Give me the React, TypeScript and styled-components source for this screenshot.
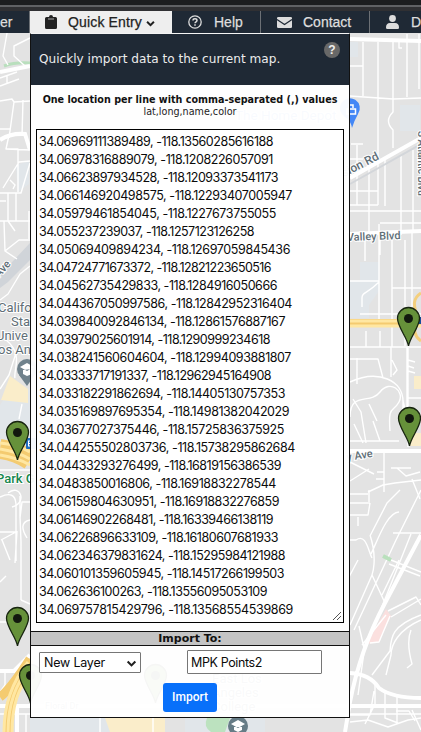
import React, { useLayoutEffect, useRef, useState } from "react";
import styled, { createGlobalStyle } from "styled-components";

const Global = createGlobalStyle`
  *{box-sizing:border-box}
  html,body{margin:0;width:421px;height:732px;overflow:hidden}
`;
const Page = styled.div`position:relative;width:421px;height:732px;overflow:hidden;display:flex;flex-direction:column;`;
const MapLayer = styled.svg`position:absolute;inset:0;`;
const Chrome = styled.div`position:relative;height:11px;background:#303033;border-top:5px solid #1c1d1f;flex:none;&::before{content:"";display:block;height:2px;background:#606164;}`;
const Nav = styled.nav`position:relative;display:flex;height:22px;background:#1f2935;flex:none;width:460px;`;
const NavItem = styled.div<{ $w: number; $active?: boolean; $pad: number; $gap: number }>`
  width:${p => p.$w}px;padding-left:${p => p.$pad}px;gap:${p => p.$gap}px;flex:none;
  display:flex;align-items:center;white-space:nowrap;
  font:14px/22px "Liberation Sans",Arial,sans-serif;
  -webkit-text-stroke:0.25px currentColor;
  color:${p => (p.$active ? "#222" : "#dedede")};
  background:${p => (p.$active ? "#eee" : "transparent")};
  border-right:1px solid ${p => (p.$active ? "#eee" : "#6c7075")};
  svg{flex:none;}
`;
const EntryLabel = styled.span`letter-spacing:.15px;`;
const EntryChevron = styled.svg`margin:2px 0 0 -7px;`;
const Panel = styled.section`position:relative;margin-left:30px;width:320px;height:685px;border:1px solid #111;border-top:1px solid #f4f4f4;background:rgba(255,255,255,.96);display:flex;flex-direction:column;`;
const Header = styled.header`height:51px;background:#1f2935;color:#ececec;display:flex;justify-content:space-between;padding:7px 9px 0 8px;flex:none;`;
const Lead = styled.span`font:12.1px/37px "DejaVu Sans",sans-serif;white-space:nowrap;`;
const HelpDot = styled.span`width:16px;height:16px;border-radius:50%;background:#686868;color:#eee;font:bold 12px/16px "Liberation Sans",sans-serif;text-align:center;margin-top:1px;`;
const Hint = styled.div`height:44px;padding-top:9px;display:flex;flex-direction:column;align-items:center;color:#1c1c1c;font:9.6px/12px "DejaVu Sans",sans-serif;flex:none;white-space:nowrap;`;
const HintTitle = styled.b`color:#111;`;
const Area = styled.div`position:relative;margin:0 5px;height:494px;border:1px solid #000;background:#fff;padding:2px;display:flex;flex-direction:column;flex:none;`;
const Grip = styled.svg`position:absolute;right:1px;bottom:1px;`;
const Row = styled.div`height:18px;`;
const Fitted = styled.span`display:inline-block;white-space:pre;color:#0b0b0b;font:12.5px/18px Inter,sans-serif;`;
const Band = styled.div`margin-top:8px;height:15px;border:solid #111;border-width:1px 0;background:#c4c4c4;color:#111;text-align:center;font:bold 11px/14px "DejaVu Sans",sans-serif;flex:none;`;
const Fields = styled.div`display:flex;justify-content:space-between;align-items:flex-start;padding:4px 27px 0 8px;height:37px;flex:none;`;
const Select = styled.div`margin-top:2px;width:102px;height:21px;border:1px solid #767676;border-radius:1px;background:#fff;padding:1px 3px 0 4px;display:flex;justify-content:space-between;align-items:center;`;
const Input = styled.div`width:135px;height:24px;border:1px solid #767676;border-radius:1px;background:#fff;padding:2px 3px;`;
const Button = styled.button`align-self:center;width:54px;height:29px;border:0;border-radius:3px;background:#0870fa;color:#fff;font:500 12px/29px Roboto,sans-serif;padding:0;`;

const Fit = ({ text, width }: { text: string; width: number }) => {
  const ref = useRef<HTMLSpanElement>(null);
  const [spacing, setSpacing] = useState(0);
  useLayoutEffect(() => {
    if (ref.current) {
      const natural = ref.current.getBoundingClientRect().width - spacing * text.length;
      setSpacing((width - natural) / text.length);
    }
  }, [text, width]);
  return <Fitted ref={ref} style={{ letterSpacing: `${spacing}px` }}>{text}</Fitted>;
};

const points: [string, number][] = [
  ["34.06969111389489, -118.13560285616188", 273], ["34.06978316889079, -118.1208226057091", 273],
  ["34.06623897934528, -118.12093373541173", 278], ["34.066146920498575, -118.12293407005947", 292],
  ["34.05979461854045, -118.1227673755055", 276], ["34.055237239037, -118.1257123126258", 254],
  ["34.05069409894234, -118.12697059845436", 290], ["34.04724771673372, -118.12821223650516", 271],
  ["34.04562735429833, -118.1284916050666", 277], ["34.044367050997586, -118.12842952316404", 292],
  ["34.039840092846134, -118.12861576887167", 285], ["34.03979025601914, -118.1290999234618", 270],
  ["34.038241560604604, -118.12994093881807", 291], ["34.03333717191337, -118.12962945164908", 271],
  ["34.033182291862694, -118.14405130757353", 285], ["34.035169897695354, -118.14981382042029", 289],
  ["34.03677027375446, -118.15725836375925", 284], ["34.044255502803736, -118.15738295862684", 295],
  ["34.04433293276499, -118.16819156386539", 281], ["34.0483850016806, -118.16918832278544", 276],
  ["34.06159804630951, -118.16918832276859", 279], ["34.06146902268481, -118.16339466138119", 273],
  ["34.06226896633109, -118.16180607681933", 278], ["34.062346379831624, -118.15295984121988", 285],
  ["34.060101359605945, -118.14517266199503", 284], ["34.062636100263, -118.13556095053109", 267],
  ["34.069757815429796, -118.13568554539869", 293],
];

const pins: [number, number][] = [[408, 307], [409, 407], [17, 421], [17, 607], [30, 664], [155, 664]];

const Pin = ({ x, y }: { x: number; y: number }) => (
  <g transform={`translate(${x} ${y})`}>
    <path d="M.5 39 C-1 30-10.5 20-10.5 11.3A11 10.8 0 0 1 11.5 11.3C11.5 20 2 30 .5 39Z" fill="#66913a" stroke="#182510" strokeWidth="1.3" />
    <circle cx=".5" cy="11.5" r="4.5" fill="#12180e" />
  </g>
);

const CityMap = () => (
  <MapLayer width="421" height="732" viewBox="0 0 421 732">
    <rect width="421" height="732" fill="#e3e3e3" />
    <g fill="#e1e6ea">
      <path d="M350 42h8v15h-8zM400 105h20v26h-20zM350 281h29v10l-10 14v13h-19zM360 262h19v19h-19zM16 165l13-4v23l-11 8z" />
      <path d="M0 405l14-22 16 6v60H0zM30 718h80v14H30zM185 718h80v14h-80z" />
      <path d="M0 275l30-32v17L8 282l-8 6z" fill="#d0d4d9" />
    </g>
    <path d="M4 66Q15 62 30 63" stroke="#b9dfbd" strokeWidth="3" fill="none" />
    <path d="M10 376l18 13v14L1 400z" fill="#faedca" />
    <path d="M414 376h7v13h-7zM410 433h11v13h-11zM105 718h60v14H110z" fill="#faedca" />
    <path d="M386 609l5 7-12 26-12 2z" fill="#fbe0df" />
    <g fill="none" stroke="#fff" strokeWidth="1.4" strokeLinejoin="round">
      <path d="M7 33L3 56 8 65M30 38L14 46 14 56 25 66M0 78L17 72M0 86L19 79M7 75v9M0 101L12 99 14 102 9 138M23 100l-1 36M14 102L30 101M0 129h10M9 135L6 149 18 149 18 192M6 149L30 150M30 161l-11 1-16 26M10 180l5 5-2 4M0 193h21l9-30M8 193v28l7 10M0 201h6M0 221h30M16 193v28M29 211v28M4 221l1 30 14-11h11M5 251l12 8" />
      <path d="M0 300l8-6 12-20 10-8M6 340c18 14 7 31 9 38M0 389l9-14 7-22M0 470h30M8 493c12-10 20 10 4 14M22 404l-3 15" />
      <path d="M0 497q15-7 16 7v57M0 532h16L1 540M17 531l-2 32M2 540l8 20M20 496v20l1 26v58M30 502h-8l-2 16M30 520c-10 2-8 10-3 18M0 582l6-6M0 622h8M21 600l9 4M0 670l5 3v12l-5 7" />
      <path d="M363 42v54M378 42v163M393 42v70q-9 9 0 18v18M407 34v63M419 34v55M399 41v7h3M350 66h13M350 96l43 3 28-1M351 144h12M350 159h13M357 145v60M350 191h28M369 165v69M385 160v46M401 155v80M413 150v82M350 205h28M350 211h71M380 223h41M412 233v95M365 235v26M392 240v107M405 240v80M379 224v96M350 281h29M392 288h29M360 314h61M380 235v20M379 282c-12 12-17 10-17 16v9" />
      <path d="M350 347h71M366 331v16M380 331v16M405 346v-15M391 347v30M407 347v64M350 359h28l5 19M357 358v26M392 360l5 10-4 5M408 348v99M408 398h13M350 382c28-13 54-2 53 21v28M350 417c0-26 20-12 30-25s25-1 19 10-11 2-9 29M354 424l9 19M373 421l7 20M369 404l8 17M353 399l8 13 5 31M403 401l4 16M350 441h49M408 360l7 2M408 366l6 2M408 371l7 2M384 452v40M350 462l24 12M350 481l19-12M368 492l15-7 12-2 26-3M397 468l9 8 14-4M391 468h20M377 472h7M376 479h8M412 479l8 20" />
      <path d="M350 503h18M350 515h18l2-12M350 494h18M358 517v9M369 490v14M400 490l-13 13-17 33M421 490l-25 50-42 90M399 512c-12 0-22 30-28 42M393 533h28M370 535c8 24 2 40 2 40l13 28M350 540h6c10-7 12 10 16 18M372 575l-22 50M358 560l-9 17M391 560l30 12M389 564l31 12M399 560l-17 35M411 534l-40 100M388 611l28-14 5 8M391 617l30-18M421 615c-30 11-30 23-31 36l-18 24M421 620c-23 10-30 25-30 35l-5 20M359 626l5 22M365 645l-7 50M411 630q-5 12 1 34l-5 4M386 615l-24 30M350 715h20l4-24M370 643l9-1 11-26M375 684v20l-10 20M385 690v28l13 5M397 697v25M350 722l18-2 20 7 20-7 13-2M412 710l9 20M396 711h13l6 10M0 714h421M26 714v18M100 714v18M153 714v18" />
    </g>
    <g fill="none" stroke="#fff" strokeWidth="4">
      <path d="M0 72L30 66M0 140Q10 133 25 134L30 150M350 39l71 2M350 178L421 138M350 234L421 231M350 451h71M421 535L385 603Q360 650 350 702L345 732M350 673Q370 674 379 688Q392 698 421 698M0 706h421M17 706v26M0 671L14 671 30 655" />
    </g>
    <path d="M350 184L421 144" stroke="#d3d6da" strokeWidth="2" />
    <path d="M383 556l8 4" stroke="#b9e0bc" strokeWidth="4" />
    <g stroke="#f4cb70" fill="none"><path d="M350 323h71" strokeWidth="8" /><path d="M0 449Q16 451 30 460" strokeWidth="20" /><path d="M0 697Q10 690 30 659M8 732Q8 690 30 666" strokeWidth="9" /></g>
    <g stroke="#ffe7a2" strokeWidth="3" fill="none"><path d="M350 321h71M350 326h71M0 443Q19 445 30 452M0 449Q18 452 30 459M0 455Q18 458 30 465M4 732Q4 692 28 662M8 732Q8 692 30 667M12 732Q12 694 30 675" /></g>
    <path d="M421 293c-12 8-4 18-4 25s-7 15 4 23" stroke="#f4cf7d" strokeWidth="3" fill="none" />
    <path d="M421 317h-2v7h2" fill="#174f9b" />
    <g fontFamily="Roboto,sans-serif" fill="#606e76" stroke="#fff" strokeWidth="2" paintOrder="stroke" fontSize="11">
      <g fontWeight="500">
        <text transform="translate(338.500 180) rotate(-27)" fontSize="12">ssion Rd</text>
        <text transform="translate(347 241) rotate(-2)">Valley Blvd</text>
        <text transform="translate(347 461) rotate(-9)">y Ave</text>
        <text transform="translate(418 131) rotate(90)" fontSize="10">S Atlantic Blvd</text>
        <text transform="translate(-1 278) rotate(-48)">Ave</text>
      </g>
      <g fontSize="13"><text x="-2" y="312">Califo</text><text x="11" y="326">Sta</text><text x="-4" y="340">Unive</text><text x="-2" y="354">os An</text></g>
      <g fontSize="13"><text x="212" y="683">East Los</text><text x="212" y="697">Angeles</text><text x="212" y="711">College</text><text x="45" y="709" fontSize="9">Floral Dr</text></g>
      <text x="-4" y="483" fontSize="13" fontWeight="500" fill="#16874d">Park G</text>
      <text x="235" y="120" fontSize="13.500" fill="#5485d4">The Home Depot</text>
    </g>
    <path d="M352 128q-1-7-7-11a10 10 0 1 1 13-3q-4 7-6 14Z" fill="#4387f6" />
    <path d="M347 109h8.500v5H347zM349 108v-3h4v3" fill="none" stroke="#fff" strokeWidth="1.5" />
    <circle cx="27" cy="369" r="10" fill="#70828c" /><path d="M19 375l8 11 7-10" fill="#70828c" /><path d="M20 367l7-4 7 4-7 4zM23 370v4l4 2 5-2v-5" fill="#fff" />
    <path d="M207 718h23l-5 14h-14q-8-5-4-14Z" fill="#bce2bf" />
    <circle cx="238" cy="726" r="10" fill="#667c86" /><path d="M231 724l7-4 7 4-7 4zM234 727v3l4 2 4-2v-3" fill="#fff" />
    <rect x="26" y="438" width="10" height="11" rx="1" fill="#216dc0" />
    <path d="M28 441h3M28 443.500h3M28 446h3M28.500 441v5" stroke="#fff" />
    {pins.map(([x, y]) => <Pin key={`${x}-${y}`} x={x} y={y} />)}
  </MapLayer>
);

export default function App() {
  return (
    <Page>
      <Global />
      <CityMap />
      <Chrome />
      <Nav>
        <NavItem $w={30} $pad={0} $gap={0}>er</NavItem>
        <NavItem $w={142} $pad={15} $gap={11} $active>
          <svg width="12" height="14" viewBox="0 0 12 14"><path d="M1.5 2H4a2 2 0 0 1 4 0h2.500Q12 2 12 3.500v9q0 1.500-1.500 1.500h-9Q0 14 0 12.500v-9Q0 2 1.500 2Z" fill="#222" /><path d="M3 3.500h6v1H3z" fill="#aaa" /></svg>
          <EntryLabel>Quick Entry</EntryLabel>
          <EntryChevron width="9" height="9" viewBox="0 0 10 10"><path d="M1.2 3L5 6.800 8.800 3" fill="none" stroke="#202020" strokeWidth="2.200" /></EntryChevron>
        </NavItem>
        <NavItem $w={89} $pad={16} $gap={12}>
          <svg width="14" height="14" viewBox="0 0 14 14"><circle cx="7" cy="7" r="6.200" fill="none" stroke="#ddd" strokeWidth="1.300" /><path d="M5 5.500c0-2.300 4-2.300 4 0 0 1.300-2 1.300-2 2.800M7 9.300v1.500" fill="none" stroke="#ddd" strokeWidth="1.500" /></svg>
          Help
        </NavItem>
        <NavItem $w={109} $pad={16} $gap={11}>
          <svg width="15" height="11" viewBox="0 0 15 11"><rect width="15" height="11" rx="1.300" fill="#ddd" /><path d="M0 2.500L7.500 7.500 15 2.500" fill="none" stroke="#1f2935" strokeWidth="1.200" /></svg>
          Contact
        </NavItem>
        <NavItem $w={90} $pad={16} $gap={12}>
          <svg width="13" height="14" viewBox="0 0 13 14"><circle cx="6.500" cy="3.500" r="3.400" fill="#ddd" /><path d="M0 12.500q0-4.500 4-4.500h5q4 0 4 4.500 0 1.500-1.300 1.500H1.300Q0 14 0 12.500" fill="#ddd" /></svg>
          D
        </NavItem>
      </Nav>
      <Panel>
        <Header><Lead>Quickly import data to the current map.</Lead><HelpDot>?</HelpDot></Header>
        <Hint><HintTitle>One location per line with comma-separated (,) values</HintTitle><span>lat,long,name,color</span></Hint>
        <Area>
          {points.map(([text, end]) => <Row key={text}><Fit text={text} width={end - 39} /></Row>)}
          <Grip width="10" height="10" viewBox="0 0 10 10"><path d="M1 9L9 1M5 9L9 5" stroke="#555" strokeWidth="1" /></Grip>
        </Area>
        <Band>Import To:</Band>
        <Fields>
          <Select>
            <Fit text="New Layer" width={61} />
            <svg width="11" height="11" viewBox="0 0 10 10"><path d="M1.500 3.200L5 6.700 8.500 3.200" fill="none" stroke="#202020" strokeWidth="1.900" /></svg>
          </Select>
          <Input><Fit text="MPK Points2" width={71} /></Input>
        </Fields>
        <Button>Import</Button>
      </Panel>
    </Page>
  );
}
